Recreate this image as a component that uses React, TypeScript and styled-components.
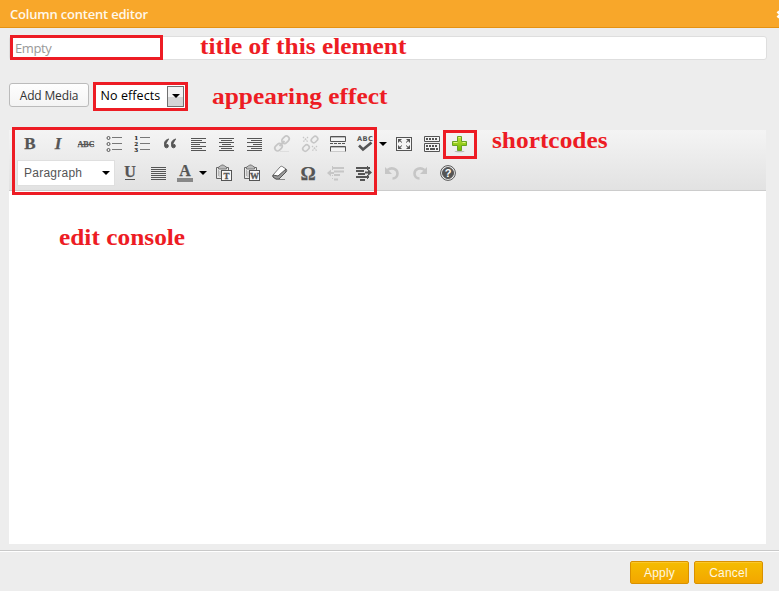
import React from "react";
import styled, { createGlobalStyle } from "styled-components";

const Global = createGlobalStyle`
  * { box-sizing: border-box; }
  body { margin: 0; overflow: hidden; background: #ededed; }
`;
const humanist = `"Open Sans", "Noto Sans", sans-serif`;

const Dialog = styled.div`
  position: relative;
  width: 779px;
  height: 591px;
  overflow: hidden;
  display: flex;
  flex-direction: column;
  background: #ededed;
  font-family: ${humanist};
`;
const TitleBar = styled.header`
  height: 28px;
  flex: none;
  display: flex;
  align-items: center;
  justify-content: space-between;
  padding-left: 10px;
  background: #f8a72a;
  border-bottom: 1px solid #e59212;
  overflow: hidden;
`;
const Heading = styled.h1`
  margin: 0;
  font-size: 13px;
  line-height: 26px;
  font-weight: 600;
  letter-spacing: -0.2px;
  color: #fff8ea;
`;
const Close = styled.svg`
  width: 9px;
  height: 9px;
  flex: none;
  margin: 2px -6px 0 0;
`;
const Content = styled.main`
  height: 522px;
  flex: none;
  padding: 8px 12px 0 9px;
`;
const TitleInput = styled.input`
  display: block;
  width: 758px;
  height: 24px;
  padding: 0 5px 1px;
  border: 1px solid #dedede;
  border-radius: 3px;
  outline: 0;
  background: #fff;
  font: 13px ${humanist};
  letter-spacing: -0.4px;
  &::placeholder { color: #999; opacity: 1; }
`;
const Controls = styled.div`
  display: flex;
  gap: 7px;
  margin-top: 23px;
  height: 24px;
`;
const MediaButton = styled.button`
  width: 80px;
  height: 24px;
  padding: 1px 0 0;
  border: 1px solid #bbb;
  border-radius: 3px;
  background: linear-gradient(#fefefe, #f4f4f4);
  color: #333;
  font: 12px/20px ${humanist};
  letter-spacing: -0.15px;
  white-space: nowrap;
`;
const Select = styled.div`
  display: flex;
  align-items: center;
  justify-content: space-between;
  width: 90px;
  height: 24px;
  margin-top: 1px;
  padding: 0 2px 0 4.5px;
  background: #fff;
  color: #000;
  font-size: 12.5px;
  letter-spacing: 0.08px;
  line-height: 22px;
  white-space: nowrap;
`;
const SelectLabel = styled.span`
  margin-top: -1px;
`;
const DropButton = styled.span`
  display: flex;
  align-items: center;
  justify-content: center;
  width: 17px;
  height: 21px;
  border: 1px solid #707070;
  background: linear-gradient(#f3f3f3 50%, #d5d5d5 51%);
`;
const Arrow = styled.span`
  width: 0;
  height: 0;
  flex: none;
  border: 4px solid transparent;
  border-top-color: #000;
  border-bottom: 0;
`;
const Editor = styled.section`
  width: 757px;
  height: 414px;
  margin-top: 23px;
  background: #fff;
`;
const Toolbar = styled.div`
  height: 61px;
  padding: 4px 8px 0 11px;
  background: linear-gradient(#f4f4f4, #e2e2e2);
  border-bottom: 1px solid #ccc;
`;
const ToolRow = styled.div<{ $second?: boolean }>`
  display: flex;
  align-items: center;
  gap: 8px;
  height: ${(p) => (p.$second ? 26 : 20)}px;
  margin: ${(p) => (p.$second ? "6px 0 0 -3px" : "0")};
`;
const Tool = styled.button<{ $muted?: boolean }>`
  width: 20px;
  height: 20px;
  flex: none;
  padding: 0;
  border: 0;
  background: none;
  color: ${(p) => (p.$muted ? "#c6c6c6" : "#555")};
  svg { display: block; width: 20px; height: 20px; overflow: visible; }
`;
const MenuTool = styled.div<{ $pull?: number; $gap: number }>`
  display: flex;
  align-items: center;
  gap: ${(p) => p.$gap}px;
  margin-left: ${(p) => p.$pull || 0}px;
  margin-right: -1px;
`;
const Format = styled.div`
  display: flex;
  align-items: center;
  justify-content: space-between;
  width: 98px;
  height: 26px;
  margin-right: -3px;
  padding: 0 4px 1px 6px;
  border: 1px solid #dfdfdf;
  background: #fff;
  color: #555;
  font: 12px "Liberation Sans", sans-serif;
  letter-spacing: 0.25px;
`;
const Footer = styled.footer`
  flex: 1;
  display: flex;
  justify-content: flex-end;
  gap: 5px;
  padding: 10px 16px 0;
  border-top: 1px solid #c9c9c9;
  box-shadow: inset 0 1px #fff;
`;
const Action = styled.button<{ $width: number }>`
  width: ${(p) => p.$width}px;
  height: 23px;
  padding: 1px 0 0;
  border: 1px solid #d99100;
  border-radius: 2px;
  background: linear-gradient(#f5bd00, #f3a600);
  box-shadow: inset 0 1px #fac72c;
  color: #fff8e0;
  font: 12px/20px "Liberation Sans", sans-serif;
  letter-spacing: 0.2px;
`;
const Highlight = styled.div<{ $x: number; $y: number; $w: number; $h: number }>`
  position: absolute;
  left: ${(p) => p.$x}px;
  top: ${(p) => p.$y}px;
  width: ${(p) => p.$w}px;
  height: ${(p) => p.$h}px;
  border: 3px solid #ed1c24;
  pointer-events: none;
`;
const Note = styled.div<{ $x: number; $y: number }>`
  position: absolute;
  left: ${(p) => p.$x}px;
  top: ${(p) => p.$y}px;
  color: #ed1c24;
  font: bold 23px/26px "Liberation Serif", serif;
  white-space: nowrap;
  transform: scaleX(1.103);
  transform-origin: left;
`;

const Svg = ({ children }: { children: React.ReactNode }) => (
  <svg viewBox="0 0 20 20" fill="none" stroke="currentColor">{children}</svg>
);
const Letter = ({ text, size = 16, y = 15, italic = false }: { text: string; size?: number; y?: number; italic?: boolean }) => (
  <text x="10" y={y} textAnchor="middle" fill="currentColor" stroke="currentColor" strokeWidth=".25"
    fontFamily="Liberation Serif, serif" fontWeight="bold" fontStyle={italic ? "italic" : "normal"} fontSize={size}>{text}</text>
);
const Lines = ({ align }: { align: "left" | "center" | "right" | "full" }) => (
  <Svg>
    {[15, 11, 15, 9, 15, 11, 15].map((full, i) => {
      const w = align === "full" ? 15 : full;
      const x = align === "center" ? 3 + (15 - w) / 2 : align === "right" ? 18 - w : 3;
      return <path key={i} d={`M${x} ${4.5 + i * 2}h${w}`} />;
    })}
  </Svg>
);
const List = ({ numbered = false }: { numbered?: boolean }) => (
  <Svg>
    {[0, 1, 2].map((i) => (
      <g key={i}>
        {numbered
          ? <text x="2.500" y={6 + i * 6} fontFamily="Liberation Serif, serif" fontWeight="bold" fontSize="7" fill="#222" stroke="#222" strokeWidth=".2">{i + 1}</text>
          : <circle cx="4.500" cy={4 + i * 6} r="1.500" />}
        <path d={`M8 ${3.5 + i * 6}h10`} stroke="#777" />
      </g>
    ))}
  </Svg>
);
const Paste = ({ letter }: { letter: string }) => (
  <Svg>
    <g transform="translate(-1 0)">
      <path d="M5.500 4.500h-2v11H9M13 4.500h2.500V7" stroke="#666" />
      <path d="M5.500 6V4l2-1 1-1h2l1 1 2 1v2z" fill="#bbb" stroke="#777" />
      <path d="M5.500 7v6M7 8v6" stroke="#b5b5b5" />
      <rect x="8.500" y="7.500" width="10" height="10" fill="#f7f7f7" />
      <text x="13.500" y="15.800" textAnchor="middle" fill="currentColor" stroke="currentColor" strokeWidth=".3" fontFamily="Liberation Serif, serif" fontWeight="bold" fontSize="9">{letter}</text>
    </g>
  </Svg>
);
const Link = ({ broken = false }: { broken?: boolean }) => (
  <Svg>
    {broken ? (
      <g strokeWidth="1.600">
        <rect x="11" y="3" width="7" height="5" rx="2.400" transform="rotate(-45 14.500 5.500)" />
        <rect x="2.500" y="11.500" width="7" height="5" rx="2.400" transform="rotate(-45 6 14)" />
        <path d="m3 3 5 5m0-5L3 8m9 4 5 5m0-5-5 5" strokeWidth="1.200" strokeDasharray="1.500 1" />
      </g>
    ) : (
      <g strokeWidth="1.700">
        <rect x="9.500" y="3" width="8" height="5.500" rx="2.700" transform="rotate(-45 13.500 5.750)" />
        <rect x="2.500" y="10.500" width="8" height="5.500" rx="2.700" transform="rotate(-45 6.500 13.250)" />
        <path d="m7.500 12 5-5" strokeWidth="2" />
        <path d="M8 17.500h9" strokeWidth="1" stroke="#dedede" />
      </g>
    )}
  </Svg>
);
const More = () => (
  <Svg>
    <path d="M2.500 2.500h15v5h-15zM2.500 17.500v-5h15v5" fill="#f4f4f4" />
    <path d="M3 3.500h14M3 13.500h14" stroke="#bbb" />
    <path d="M2 9.500h16" strokeDasharray="3 1" />
    <path d="M3 17.500h14" stroke="#ccc" />
  </Svg>
);
const Spell = () => (
  <Svg>
    <text x="1" y="7.300" fill="currentColor" stroke="none" fontFamily="DejaVu Sans, sans-serif" fontWeight="bold" fontSize="6.700" textLength="16">ABC</text>
    <path d="m3 11.500 4 4 8.500-7" strokeWidth="2.600" />
  </Svg>
);
const Fullscreen = () => (
  <Svg>
    <rect x="2.500" y="3.500" width="15" height="13" fill="#f6f6f6" />
    <path d="M4 9V5h4zM12 5h4v4zM4 11v4h4zM12 15h4v-4z" fill="currentColor" stroke="none" />
    <path d="m5 6 3 2.500M15 6l-3 2.500M5 14l3-2.500m7 2.500-3-2.500" />
  </Svg>
);
const Kitchen = () => (
  <Svg>
    <path d="M2.500 2.500h15v5h-15zm0 7h15v8h-15z" fill="#f5f5f5" />
    <path d="M4 5h12M4 12h12" strokeWidth="2" strokeDasharray="2 1" />
    <path d="M4 15h3m1 0h5m1 0h2" strokeWidth="2" />
  </Svg>
);
const Plus = () => (
  <Svg>
    <defs><linearGradient id="green" x2="0" y2="1"><stop stopColor="#c2e43b" /><stop offset="1" stopColor="#70b900" /></linearGradient></defs>
    <ellipse cx="9.500" cy="17.500" rx="5" ry=".8" fill="#bbb" stroke="none" />
    <path d="M7.500 2.500h4v5h5v4h-5v5h-4v-5h-5v-4h5z" fill="url(#green)" stroke="#68a321" />
    <path d="M8.500 3.500h2m-7 5h4m5 0h3" stroke="#dff387" />
  </Svg>
);
const Eraser = () => (
  <Svg>
    <path d="m3 12 7-8c1-1 2-1 3 0l3 2c1 1 1 2 0 3l-7 7H6l-3-2z" fill="#fff" stroke="#777" />
    <path d="m3 12 5 1 8-7v3l-7 7H6l-3-2z" fill="#999" />
    <path d="M9 16.500h6" stroke="#888" />
  </Svg>
);
const Indent = ({ out = false }: { out?: boolean }) => (
  <Svg>
    {out ? <>
      <path d="M6 5h12M8 8.500h10M8 12h6M8 16.500h4" strokeWidth="2" />
      <path d="M8 10H4" strokeWidth="2" />
      <path d="m1 10 4-3.500v7z" fill="currentColor" stroke="none" />
      <path d="M6.500 3v15" strokeDasharray="1 2" />
    </> : <>
      <path d="M2 5h14M2 8h8M4 11h7M2 14h13M6 17h5" strokeWidth="1.800" />
      <path d="M11 9.500h4" strokeWidth="2" />
      <path d="m14 6 4 3.500-4 3.500z" fill="currentColor" stroke="none" />
      <path d="M13.500 3v15" strokeDasharray="1 2" />
    </>}
  </Svg>
);
const History = ({ redo = false }: { redo?: boolean }) => (
  <Svg><g transform={redo ? "matrix(-1 0 0 1 20 0)" : undefined}>
    <path d="M5.500 7c4-3 10-1.500 10 3.500 0 3-2 5-5 5" strokeWidth="2.600" />
    <path d="M3 4v7h7z" fill="currentColor" stroke="none" />
  </g></Svg>
);
const Help = () => (
  <Svg>
    <circle cx="10" cy="10" r="7.400" fill="#eee" />
    <circle cx="10" cy="10" r="5.500" fill="currentColor" />
    <text x="10" y="14" textAnchor="middle" fill="#fff" stroke="none" fontFamily="Liberation Sans, sans-serif" fontWeight="bold" fontSize="11">?</text>
  </Svg>
);
const ToolButton = ({ label, children, muted }: { label: string; children: React.ReactNode; muted?: boolean }) => (
  <Tool aria-label={label} $muted={muted}>{children}</Tool>
);

export default function App() {
  return (
    <Dialog>
      <Global />
      <TitleBar>
        <Heading>Column content editor</Heading>
        <Close viewBox="0 0 9 9"><path d="m1.500 1.500 6 6m0-6-6 6" stroke="#fff" strokeWidth="2.600" /></Close>
      </TitleBar>
      <Content>
        <TitleInput placeholder="Empty" aria-label="Title" />
        <Controls>
          <MediaButton>Add Media</MediaButton>
          <Select><SelectLabel>No effects</SelectLabel><DropButton><Arrow /></DropButton></Select>
        </Controls>
        <Editor>
          <Toolbar>
            <ToolRow>
              <ToolButton label="Bold"><Svg><Letter text="B" size={17} /></Svg></ToolButton>
              <ToolButton label="Italic"><Svg><Letter text="I" size={17} italic /></Svg></ToolButton>
              <ToolButton label="Strikethrough"><Svg><Letter text="ABC" size={8} y={13} /><path d="M2 10.500h16" /></Svg></ToolButton>
              <ToolButton label="Bulleted list"><List /></ToolButton>
              <ToolButton label="Numbered list"><List numbered /></ToolButton>
              <ToolButton label="Quote">
                <Svg><g fill="currentColor"><path d="M9 5C4 6 4 10 5 12" /><circle cx="6.500" cy="12" r="1.800" /><path d="M16 5c-5 1-5 5-4 7" /><circle cx="13.500" cy="12" r="1.800" /></g></Svg>
              </ToolButton>
              <ToolButton label="Align left"><Lines align="left" /></ToolButton>
              <ToolButton label="Align center"><Lines align="center" /></ToolButton>
              <ToolButton label="Align right"><Lines align="right" /></ToolButton>
              <ToolButton label="Link" muted><Link /></ToolButton>
              <ToolButton label="Unlink" muted><Link broken /></ToolButton>
              <ToolButton label="More"><More /></ToolButton>
              <MenuTool $gap={3}><ToolButton label="Spelling"><Spell /></ToolButton><Arrow /></MenuTool>
              <ToolButton label="Fullscreen"><Fullscreen /></ToolButton>
              <ToolButton label="Toolbar toggle"><Kitchen /></ToolButton>
              <ToolButton label="Shortcodes"><Plus /></ToolButton>
            </ToolRow>
            <ToolRow $second>
              <Format>Paragraph<Arrow /></Format>
              <ToolButton label="Underline"><Svg><Letter text="U" y={14} /><path d="M5 16.500h10" /></Svg></ToolButton>
              <ToolButton label="Justify"><Lines align="full" /></ToolButton>
              <MenuTool $gap={4} $pull={-1}>
                <ToolButton label="Text color"><Svg><Letter text="A" y={13} /><path d="M2 17h16" stroke="#888" strokeWidth="4" /></Svg></ToolButton>
                <Arrow />
              </MenuTool>
              <ToolButton label="Paste text"><Paste letter="T" /></ToolButton>
              <ToolButton label="Paste Word"><Paste letter="W" /></ToolButton>
              <ToolButton label="Clear formatting"><Eraser /></ToolButton>
              <ToolButton label="Special character"><Svg><Letter text="Ω" size={19} y={16.5} /></Svg></ToolButton>
              <ToolButton label="Outdent" muted><Indent out /></ToolButton>
              <ToolButton label="Indent"><Indent /></ToolButton>
              <ToolButton label="Undo" muted><History /></ToolButton>
              <ToolButton label="Redo" muted><History redo /></ToolButton>
              <ToolButton label="Help"><Help /></ToolButton>
            </ToolRow>
          </Toolbar>
        </Editor>
      </Content>
      <Footer><Action $width={59}>Apply</Action><Action $width={69}>Cancel</Action></Footer>
      <Highlight $x={10} $y={35} $w={153} $h={25} />
      <Highlight $x={93} $y={82} $w={95} $h={29} />
      <Highlight $x={12} $y={127} $w={365} $h={68} />
      <Highlight $x={443} $y={130} $w={34} $h={29} />
      <Note $x={200} $y={34}>title of this element</Note>
      <Note $x={212} $y={84}>appearing effect</Note>
      <Note $x={492} $y={128}>shortcodes</Note>
      <Note $x={59} $y={225}>edit console</Note>
    </Dialog>
  );
}
